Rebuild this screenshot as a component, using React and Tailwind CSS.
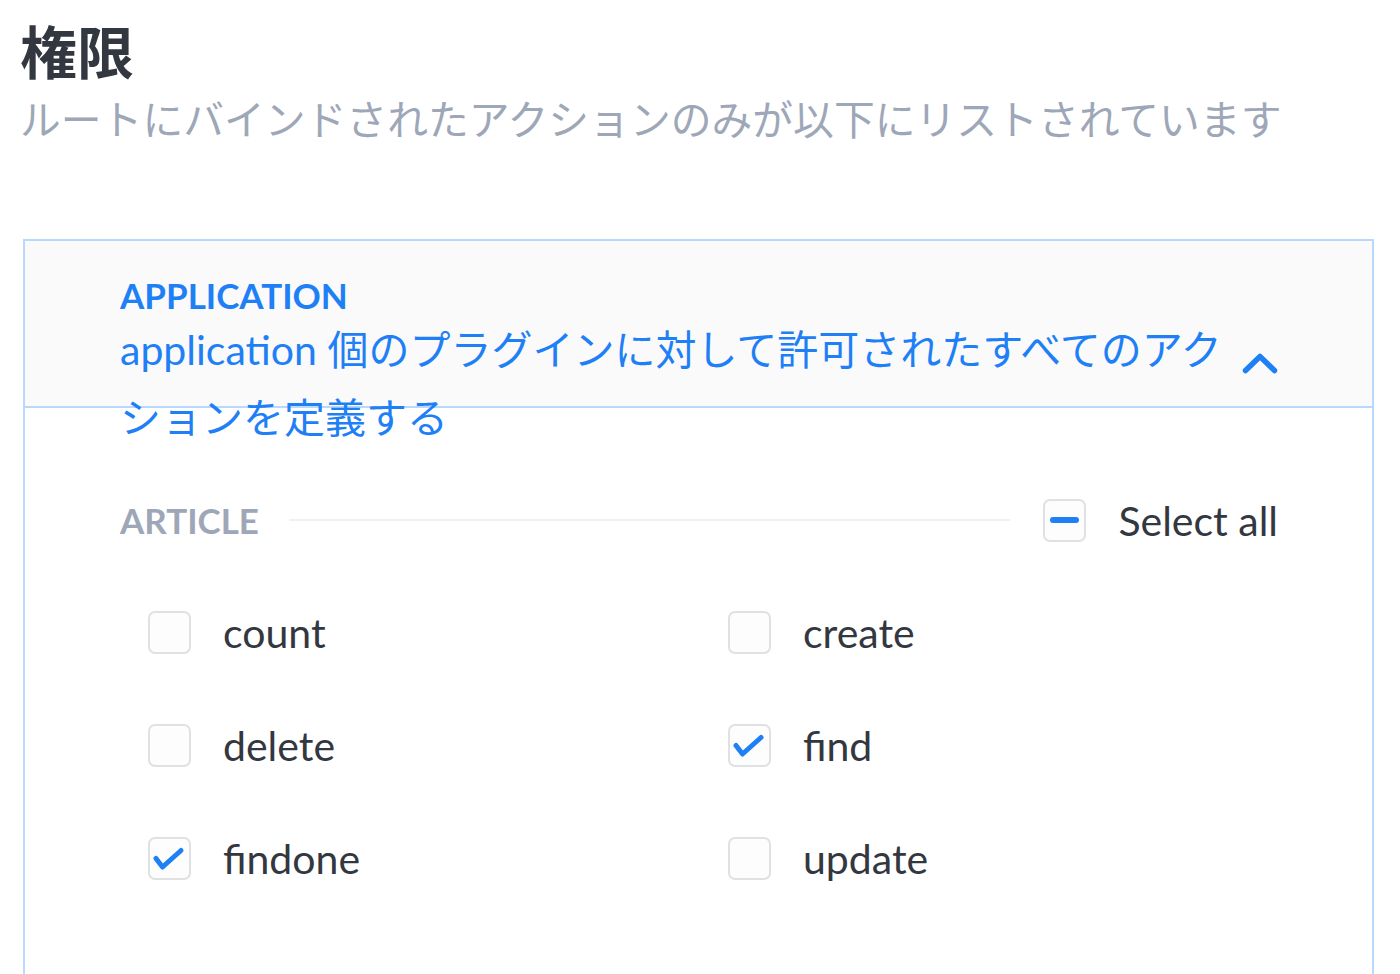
import React from "react";

const font = { fontFamily: "Lato, 'Noto Sans CJK JP', sans-serif" };

function Box({ state }) {
  return (
    <div className="w-[43px] h-[43px] shrink-0 rounded-[7px] border-2 border-[#e0e1e4] bg-[#fdfdfd] flex items-center justify-center">
      {state === "checked" && (
        <svg width="39" height="39" viewBox="0 0 39 39" fill="none">
          <polyline points="6,19.5 12.5,28 31,11.5" stroke="#1f80f6" strokeWidth="5" strokeLinecap="round" strokeLinejoin="round" />
        </svg>
      )}
      {state === "partial" && <div className="w-[29px] h-[6px] rounded-full bg-[#1f80f6]" />}
    </div>
  );
}

function Item({ label, checked }) {
  return (
    <div className="h-[113px] flex items-center pl-[28px]">
      <Box state={checked ? "checked" : "none"} />
      <span className="ml-[32px] text-[41px] leading-none text-[#333740]">{label}</span>
    </div>
  );
}

export default function App() {
  const items = [
    ["count", false],
    ["create", false],
    ["delete", false],
    ["find", true],
    ["findone", true],
    ["update", false],
  ];
  return (
    <div className="w-[1400px] h-[974px] overflow-hidden bg-white pt-[18px]" style={font}>
      <div className="pl-[20px]">
        <h1 className="text-[57px] leading-[68px] font-bold text-[#333740]">権限</h1>
        <p className="mt-[7px] text-[40.8px] leading-[54px] text-[#9ea7b8]">
          ルートにバインドされたアクションのみが以下にリストされています
        </p>
      </div>
      <div className="mt-[92px] ml-[23px] w-[1351px] h-[800px] border-2 border-[#b9d8fb] bg-white">
        <div className="h-[167px] border-b-2 border-[#b9d8fb] bg-[#fafafb] pt-[33px] pl-[95px] pr-[94px]">
          <div className="flex items-center">
            <div className="w-[1110px]">
              <div className="text-[35px] leading-[42px] font-bold text-[#1f80f6]">APPLICATION</div>
              <div className="text-[41px] leading-[68px] text-[#1f80f6]">
                application 個のプラグインに対して許可されたすべてのアクションを定義する
              </div>
            </div>
            <div className="ml-auto">
              <svg width="36" height="22" viewBox="0 0 36 22" fill="none">
                <polyline points="3.5,18.5 18,4.5 32.5,18.5" stroke="#1f80f6" strokeWidth="5.5" strokeLinecap="round" strokeLinejoin="round" />
              </svg>
            </div>
          </div>
        </div>
        <div className="pt-[90px] pl-[95px] pr-[94px]">
          <div className="h-[44px] flex items-center">
            <span className="text-[35px] leading-none font-bold text-[#9ea7b8]">ARTICLE</span>
            <div className="flex-1 h-[2px] bg-[#f1f1f3] ml-[30px] mr-[33px]" />
            <Box state="partial" />
            <span className="ml-[32px] text-[41px] leading-none text-[#333740]">Select all</span>
          </div>
          <div className="mt-[34px] grid grid-cols-[580px_1fr]">
            {items.map(([l, c]) => (
              <Item key={l} label={l} checked={c} />
            ))}
          </div>
        </div>
      </div>
    </div>
  );
}
